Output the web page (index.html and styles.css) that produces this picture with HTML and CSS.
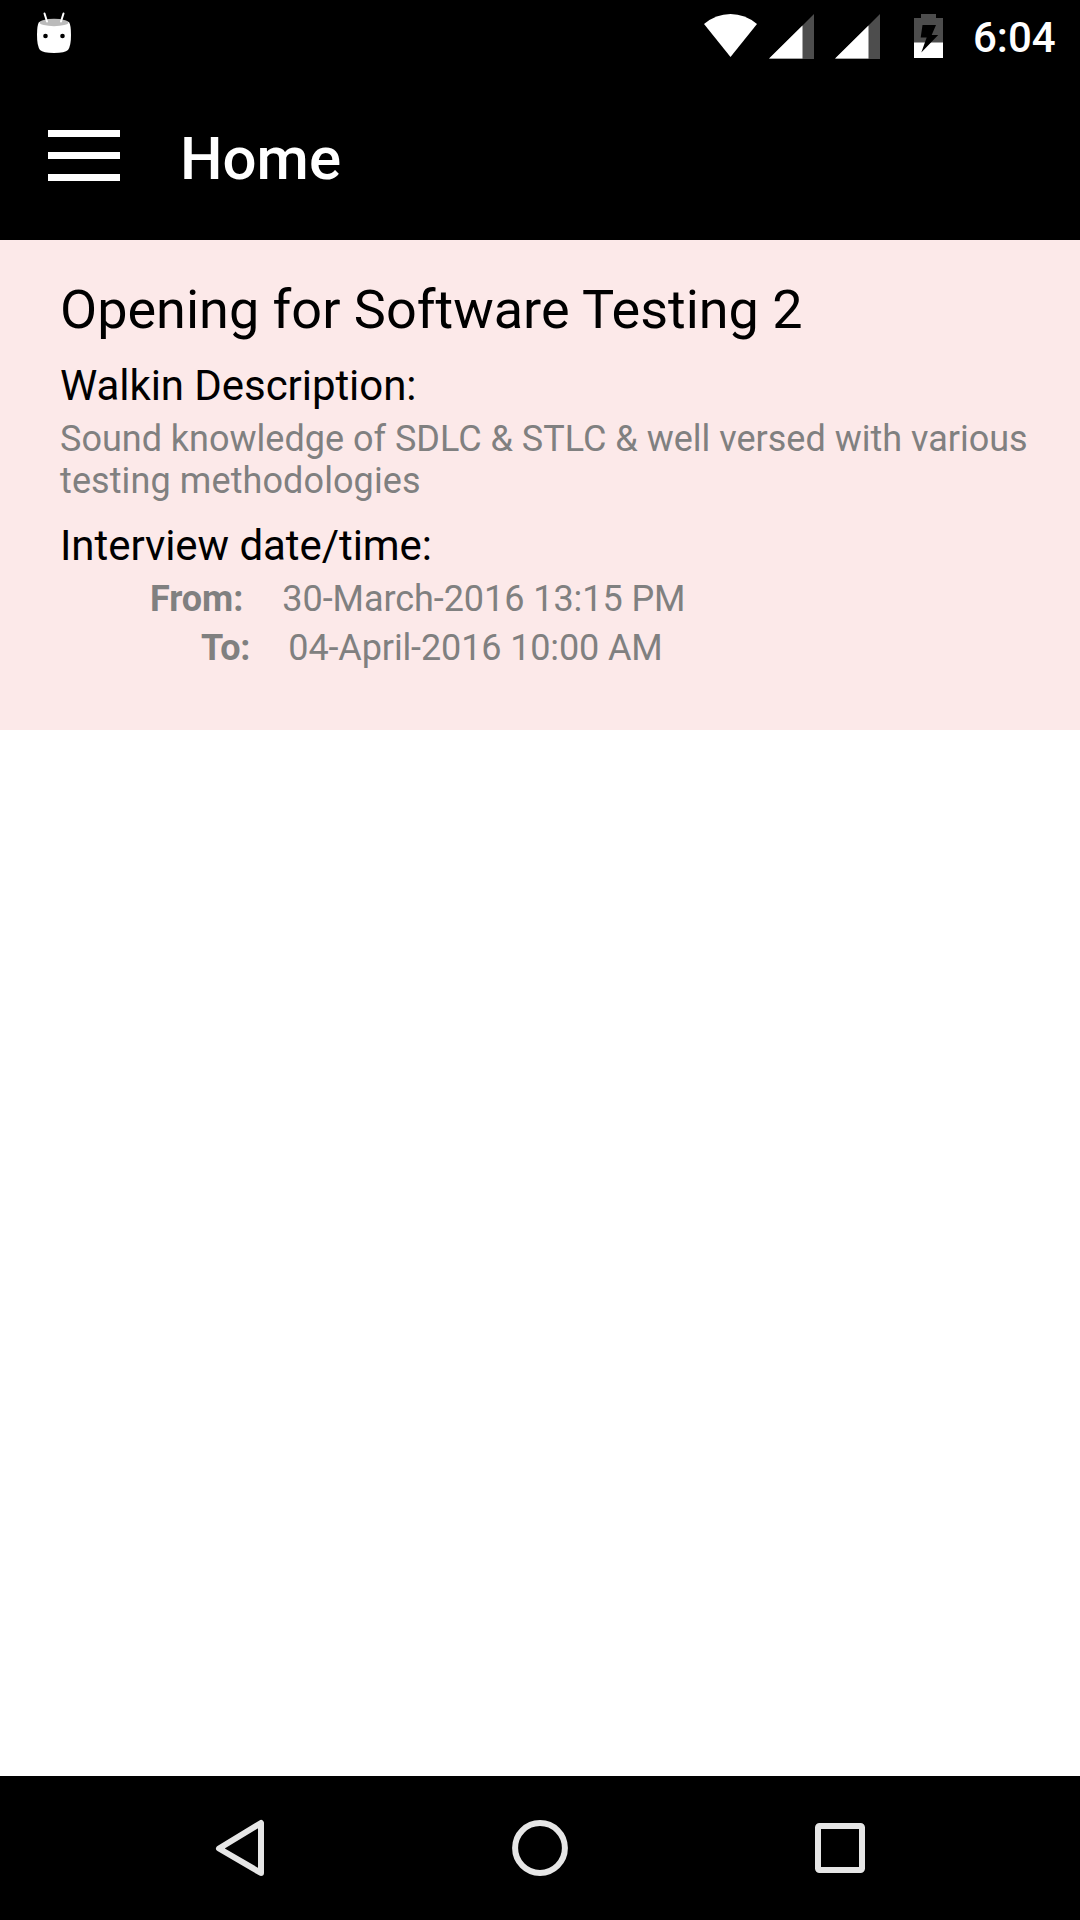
FILE: index.html
```html
<!DOCTYPE html>
<html lang="en">
<head>
<meta charset="utf-8">
<title>Home</title>
<link rel="stylesheet" href="styles.css">
</head>
<body>
<header class="status">
  <svg class="droid" viewBox="30 10 50 50" width="50" height="50"><path d="M39 22Q54 17 69 22Q71 25 71 35Q71 46 68 50Q65 53 54 53Q43 53 40 50Q37 46 37 35Q37 25 39 22Z" fill="#fff"/><ellipse cx="54" cy="22.500" rx="14.500" ry="3.700" fill="#bbb"/><path d="M44.500 13.500l2.500 8M63.500 13.500l-2.500 8" stroke="#fff" stroke-width="2" stroke-linecap="round"/><circle cx="45.500" cy="36" r="2.300"/><circle cx="62.500" cy="36" r="2.300"/></svg>
  <svg class="signals" viewBox="700 0 250 72" width="250" height="72"><path d="M704 24Q716 14 730.500 14T757 24L730.500 57z" fill="#fff"/><path d="M814 14v45h-45zM880 14v45h-45z" fill="#4d4d4d"/><path d="M802.500 25.500V58.500H769zM868.500 25.500V58.500H835z" fill="#fff"/><path d="M914 18h7v-4h15v4h7v40h-29z" fill="#4d4d4d"/><path d="M914 42.500h29V58h-29z" fill="#fff"/><path d="M922.500 25H936l-4.300 10h6.500L921.300 52.500l5.400-15h-6z"/></svg>
  <time class="clock">6:04</time>
</header>
<nav class="toolbar"><span class="menu"><i></i><i></i><i></i></span><h1 class="heading">Home</h1></nav>
<main class="content">
  <article class="card">
    <h2 class="title">Opening for Software Testing 2</h2>
    <h3 class="label">Walkin Description:</h3>
    <p class="text">Sound knowledge of SDLC &amp; STLC &amp; well versed with various <span class="tail">testing methodologies</span></p>
    <h3 class="label interview">Interview date/time:</h3>
    <p class="row from"><b>From:</b><span>30-March-2016 13:15 PM</span></p>
    <p class="row to"><b>To:</b><span>04-April-2016 10:00 AM</span></p>
  </article>
</main>
<footer class="navbar">
  <svg viewBox="0 0 1080 144" width="1080" height="144" fill="none" stroke="#e6e6e6" stroke-width="6"><path d="M261 47v50L219 72.500z" stroke-linejoin="round"/><circle cx="540" cy="72" r="24.900"/><rect x="818" y="50" width="44" height="44" rx="1.500"/></svg>
</footer>
</body>
</html>
```
FILE: styles.css
```css
* { box-sizing: border-box; }
body { margin: 0; width: 1080px; height: 1920px; display: flex; flex-direction: column; background: #fff; font-family: Roboto, sans-serif; color: #000; }
h1, h2, h3, p { margin: 0; font-weight: 400; white-space: nowrap; }
svg { display: block; flex: none; }
.status { height: 72px; background: #000; color: #fff; display: flex; padding-left: 30px; }
.droid { margin-top: 10px; }
.signals { margin-left: 620px; }
.clock { margin-left: 23px; font-size: 42px; font-weight: 500; line-height: 75px; }
.toolbar { height: 168px; background: #000; color: #fff; display: flex; align-items: flex-start; padding: 0 0 0 48px; gap: 60px; }
.menu { width: 72px; margin-top: 58px; display: flex; flex-direction: column; gap: 14.5px; }
.menu i { height: 7.3px; background: #fff; }
.heading { font-size: 60px; font-weight: 500; line-height: 70px; margin-top: 52px; }
.content { flex: 1; }
.card { height: 490px; background: #fce9e9; padding: 38px 40px 0 60px; }
.title { font-size: 54px; line-height: 64px; }
.label { font-size: 42px; line-height: 50px; margin-top: 19px; letter-spacing: -0.06px; }
.text { font-size: 36px; line-height: 42px; color: #808080; white-space: normal; margin-top: 7px; }
.tail { letter-spacing: 0.1px; }
.interview { margin-top: 19px; }
.row { display: flex; font-size: 36px; line-height: 49px; color: #808080; gap: 39px; letter-spacing: -0.13px; }
.row b { font-weight: 700; }
.from { padding-left: 90px; margin-top: 4px; letter-spacing: -0.06px; }
.to { padding-left: 141px; gap: 38px; }
.navbar { height: 144px; background: #000; }
```
